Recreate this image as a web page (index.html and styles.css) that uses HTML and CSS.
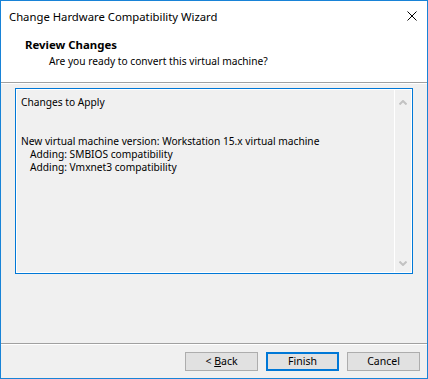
FILE: index.html
```html
<!DOCTYPE html>
<html>
<head>
    <title>Change Hardware Compatibility Wizard</title>
    <meta charset="UTF-8">
    <link rel="stylesheet" href="styles.css">
</head>
<body>
    <div class="window">
        <div class="titlebar">
            <span class="title">Change Hardware Compatibility Wizard</span>
            <svg class="close" width="10" height="10" viewBox="0 0 10 10">
                <path d="M0.5 0.5 L9.5 9.5 M9.5 0.5 L0.5 9.5" stroke="#000" stroke-width="1" fill="none"/>
            </svg>
        </div>

        <div class="header">
            <div class="heading">Review Changes</div>
            <div class="subheading">Are you ready to convert this virtual machine?</div>
        </div>

        <div class="body">
            <div class="changes">
                <div class="changes-text">
                    <div class="line">Changes to Apply</div>
                    <div class="line"></div>
                    <div class="line"></div>
                    <div class="line">New virtual machine version: Workstation 15.x virtual machine</div>
                    <div class="line indent">Adding: SMBIOS compatibility</div>
                    <div class="line indent">Adding: Vmxnet3 compatibility</div>
                </div>
                <div class="scrollbar">
                    <svg class="arrow" width="8" height="5" viewBox="0 0 8 5">
                        <path d="M0.5 4.5 L4 1 L7.5 4.5" stroke="#c2c2c2" stroke-width="2" fill="none"/>
                    </svg>
                    <svg class="arrow" width="8" height="5" viewBox="0 0 8 5">
                        <path d="M0.5 0.5 L4 4 L7.5 0.5" stroke="#c2c2c2" stroke-width="2" fill="none"/>
                    </svg>
                </div>
            </div>
        </div>

        <div class="footer">
            <button class="btn">&lt; <u>B</u>ack</button>
            <button class="btn default">Finish</button>
            <button class="btn">Cancel</button>
        </div>
    </div>
</body>
</html>
```

FILE: styles.css
```css
body {
    margin: 0;
    font-family: 'Noto Sans', 'Open Sans', sans-serif;
    font-size: 10.2px;
    color: #000;
}
.window {
    width: 428px;
    height: 379px;
    box-sizing: border-box;
    border: 1px solid #1883d7;
    background: #f0f0f0;
    display: flex;
    flex-direction: column;
}
.titlebar {
    height: 30px;
    background: #fff;
    display: flex;
    align-items: center;
    justify-content: space-between;
    padding: 0 10px 0 8px;
}
.title {
    font-size: 11.3px;
}
.close {
    display: block;
}
.header {
    background: #fff;
    padding: 6px 0 13px;
    border-bottom: 1px solid #a0a0a0;
}
.heading {
    font-weight: bold;
    font-size: 11.4px;
    line-height: 16px;
    padding-left: 24px;
}
.subheading {
    line-height: 16px;
    padding-left: 48px;
}
.body {
    flex: 1;
    border-top: 1px solid #fff;
    padding: 4px 14px 0;
}
.changes {
    height: 186px;
    box-sizing: border-box;
    border: 1px solid #0078d7;
    box-shadow: inset 0 0 0 1px #fff;
    display: flex;
}
.changes-text {
    flex: 1;
    padding: 7px 5px 5px;
}
.line {
    height: 13px;
    line-height: 13px;
    white-space: nowrap;
}
.indent {
    padding-left: 9px;
}
.scrollbar {
    width: 16px;
    margin: 1px 1px 1px 0;
    border-left: 1px solid #fff;
    display: flex;
    flex-direction: column;
    justify-content: space-between;
    align-items: center;
    padding: 10px 0 6px;
}
.arrow {
    display: block;
}
.footer {
    border-top: 1px solid #a0a0a0;
    box-shadow: inset 0 1px 0 #fff;
    padding: 8px 7px 7px;
    display: flex;
    justify-content: flex-end;
    gap: 8px;
}
.btn {
    width: 73px;
    height: 19px;
    box-sizing: border-box;
    background: #e1e1e1;
    border: 1px solid #adadad;
    font-family: inherit;
    font-size: 10.5px;
    color: #000;
    padding: 0;
    line-height: 15px;
}
.default {
    border: 2px solid #0078d7;
}
```
